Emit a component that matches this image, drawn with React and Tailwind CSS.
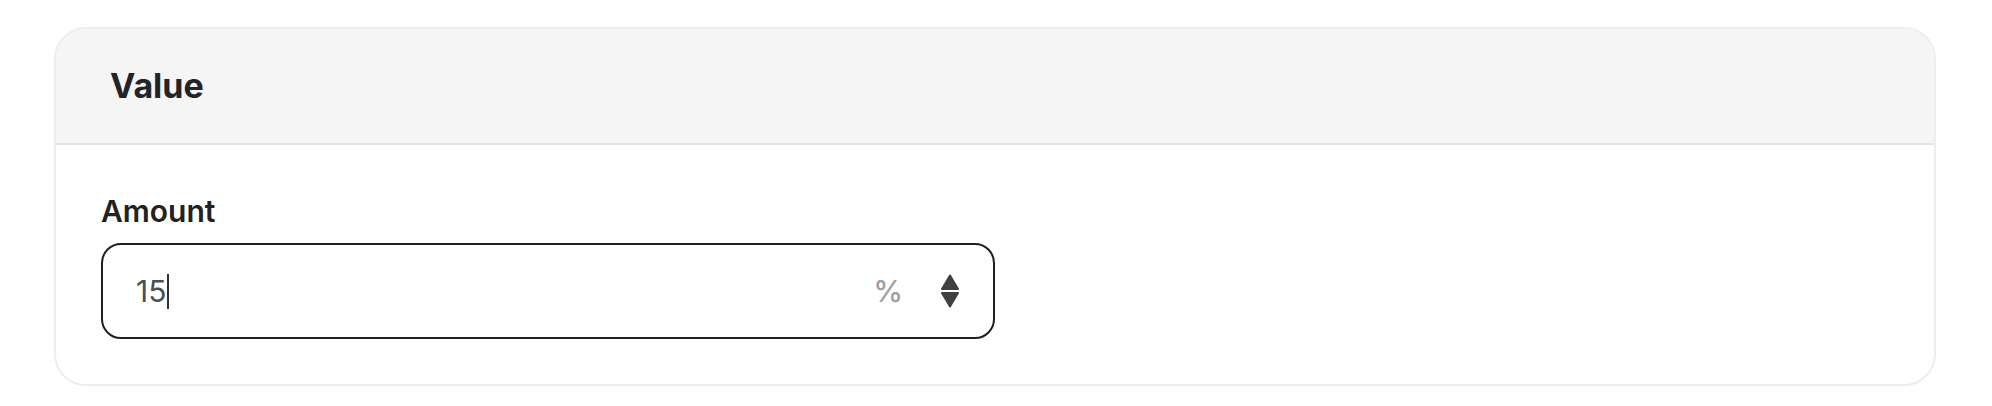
export default function App() {
  return (
    <div className="bg-white w-[1992px] h-[406px] pt-[27px] pl-[54px] pr-[56px]" style={{ fontFamily: "Inter, 'Noto Sans', sans-serif" }}>
      <div className="rounded-[32px] border-2 border-[#ededed] overflow-hidden bg-white">
        <div className="h-[114px] bg-[#f5f5f5] border-b-2 border-[#e3e3e3] flex items-center px-[54px] box-content">
          <h2 className="text-[34px] leading-[40px] font-bold text-[#222428]">Value</h2>
        </div>
        <div className="pt-[48px] pb-[45px] px-[45px]">
          <label className="block text-[30px] leading-[36px] font-semibold text-[#222222]">Amount</label>
          <div className="mt-[14px] w-[894px] h-[96px] border-2 border-[#1f1f22] rounded-[20px] flex items-center pl-[33px] pr-[34px]">
            <span className="text-[30px] leading-[36px] text-[#4a4f57]">15</span>
            <span className="w-[2px] h-[35px] bg-[#2f3338] ml-[1px]" />
            <div className="flex-1" />
            <span className="text-[30px] leading-[36px] font-medium text-[#a0a0a0]">%</span>
            <svg className="ml-[38px]" width="18" height="34" viewBox="0 0 18 34" fill="#404040" stroke="#404040" strokeWidth="2" strokeLinejoin="round">
              <path d="M9 1.5 L17 15 L1 15 Z" />
              <path d="M1 19 L17 19 L9 32.5 Z" />
            </svg>
          </div>
        </div>
      </div>
    </div>
  );
}
